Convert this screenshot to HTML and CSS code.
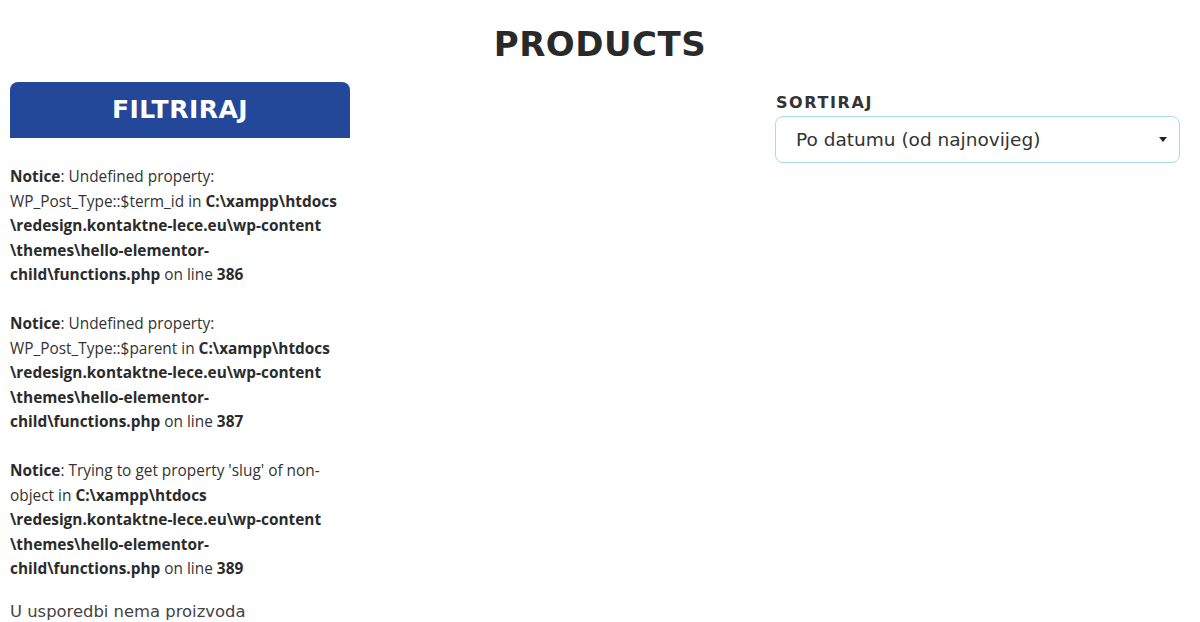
FILE: index.html
```html
<!DOCTYPE html>
<html lang="hr">
<head>
<meta charset="utf-8">
<title>Products</title>
<link rel="stylesheet" href="styles.css">
</head>
<body>
<h1 class="page-title">PRODUCTS</h1>
<div class="layout">
  <aside class="sidebar">
    <div class="filter-head">FILTRIRAJ</div>
    <div class="notices">
      <p class="notice"><b>Notice</b>: Undefined property:<br>WP_Post_Type::$term_id in <b>C:\xampp\htdocs<br>\redesign.kontaktne-lece.eu\wp-content<br>\themes\hello-elementor-<br>child\functions.php</b> on line <b>386</b></p>
      <p class="notice"><b>Notice</b>: Undefined property:<br>WP_Post_Type::$parent in <b>C:\xampp\htdocs<br>\redesign.kontaktne-lece.eu\wp-content<br>\themes\hello-elementor-<br>child\functions.php</b> on line <b>387</b></p>
      <p class="notice"><b>Notice</b>: Trying to get property 'slug' of non-<br>object in <b>C:\xampp\htdocs<br>\redesign.kontaktne-lece.eu\wp-content<br>\themes\hello-elementor-<br>child\functions.php</b> on line <b>389</b></p>
    </div>
    <p class="empty">U usporedbi nema proizvoda</p>
  </aside>
  <div class="spacer"></div>
  <div class="sort">
    <label class="sort-label" for="orderby">SORTIRAJ</label>
    <div class="select">
      <span class="select-value">Po datumu (od najnovijeg)</span>
      <span class="caret"></span>
    </div>
  </div>
</div>
</body>
</html>
```
FILE: styles.css
```css
html, body {
  margin: 0;
  padding: 0;
  background: #fff;
}
body {
  font-family: "DejaVu Sans", sans-serif;
  color: #333;
  width: 1200px;
  height: 622px;
  overflow: hidden;
}
.page-title {
  margin: 0;
  padding-top: 24px;
  height: 60px;
  box-sizing: border-box;
  text-align: center;
  font-family: "DejaVu Sans", sans-serif;
  font-weight: 700;
  font-size: 34px;
  line-height: 40px;
  color: #2a2a2a;
  letter-spacing: 0.5px;
}
.layout {
  display: flex;
  padding: 22px 20px 0 10px;
}
.sidebar {
  width: 340px;
  flex: none;
}
.spacer {
  flex: 1;
}
.filter-head {
  height: 56px;
  background: #23489a;
  border-radius: 8px 8px 0 0;
  color: #fff;
  font-family: "DejaVu Sans", sans-serif;
  font-weight: 600;
  font-size: 25px;
  line-height: 56px;
  text-align: center;
  letter-spacing: 0.5px;
}
.notices {
  padding-top: 27px;
}
.notice {
  margin: 0 0 24.5px;
  font-family: "Open Sans", sans-serif;
  font-size: 15.4px;
  line-height: 24.5px;
  color: #333;
}
.notice b {
  font-weight: 700;
  color: #2b2b2b;
}
.empty {
  margin: -6px 0 0;
  font-family: "DejaVu Sans", sans-serif;
  font-size: 16.4px;
  line-height: 24px;
  color: #444;
}
.sort {
  width: 405px;
  flex: none;
  padding-top: 11px;
}
.sort-label {
  display: block;
  font-family: "DejaVu Sans", sans-serif;
  font-weight: 700;
  font-size: 16px;
  line-height: 20px;
  letter-spacing: 1.6px;
  color: #333;
  padding-left: 1px;
}
.select {
  margin-top: 3px;
  height: 47px;
  box-sizing: border-box;
  border: 1px solid #a9dbe9;
  border-radius: 8px;
  display: flex;
  align-items: center;
  padding: 0 12px 0 20px;
}
.select-value {
  flex: 1;
  font-family: "DejaVu Sans", sans-serif;
  font-size: 18.5px;
  color: #333;
}
.caret {
  width: 0;
  height: 0;
  border-left: 4.5px solid transparent;
  border-right: 4.5px solid transparent;
  border-top: 5px solid #222;
}
```
